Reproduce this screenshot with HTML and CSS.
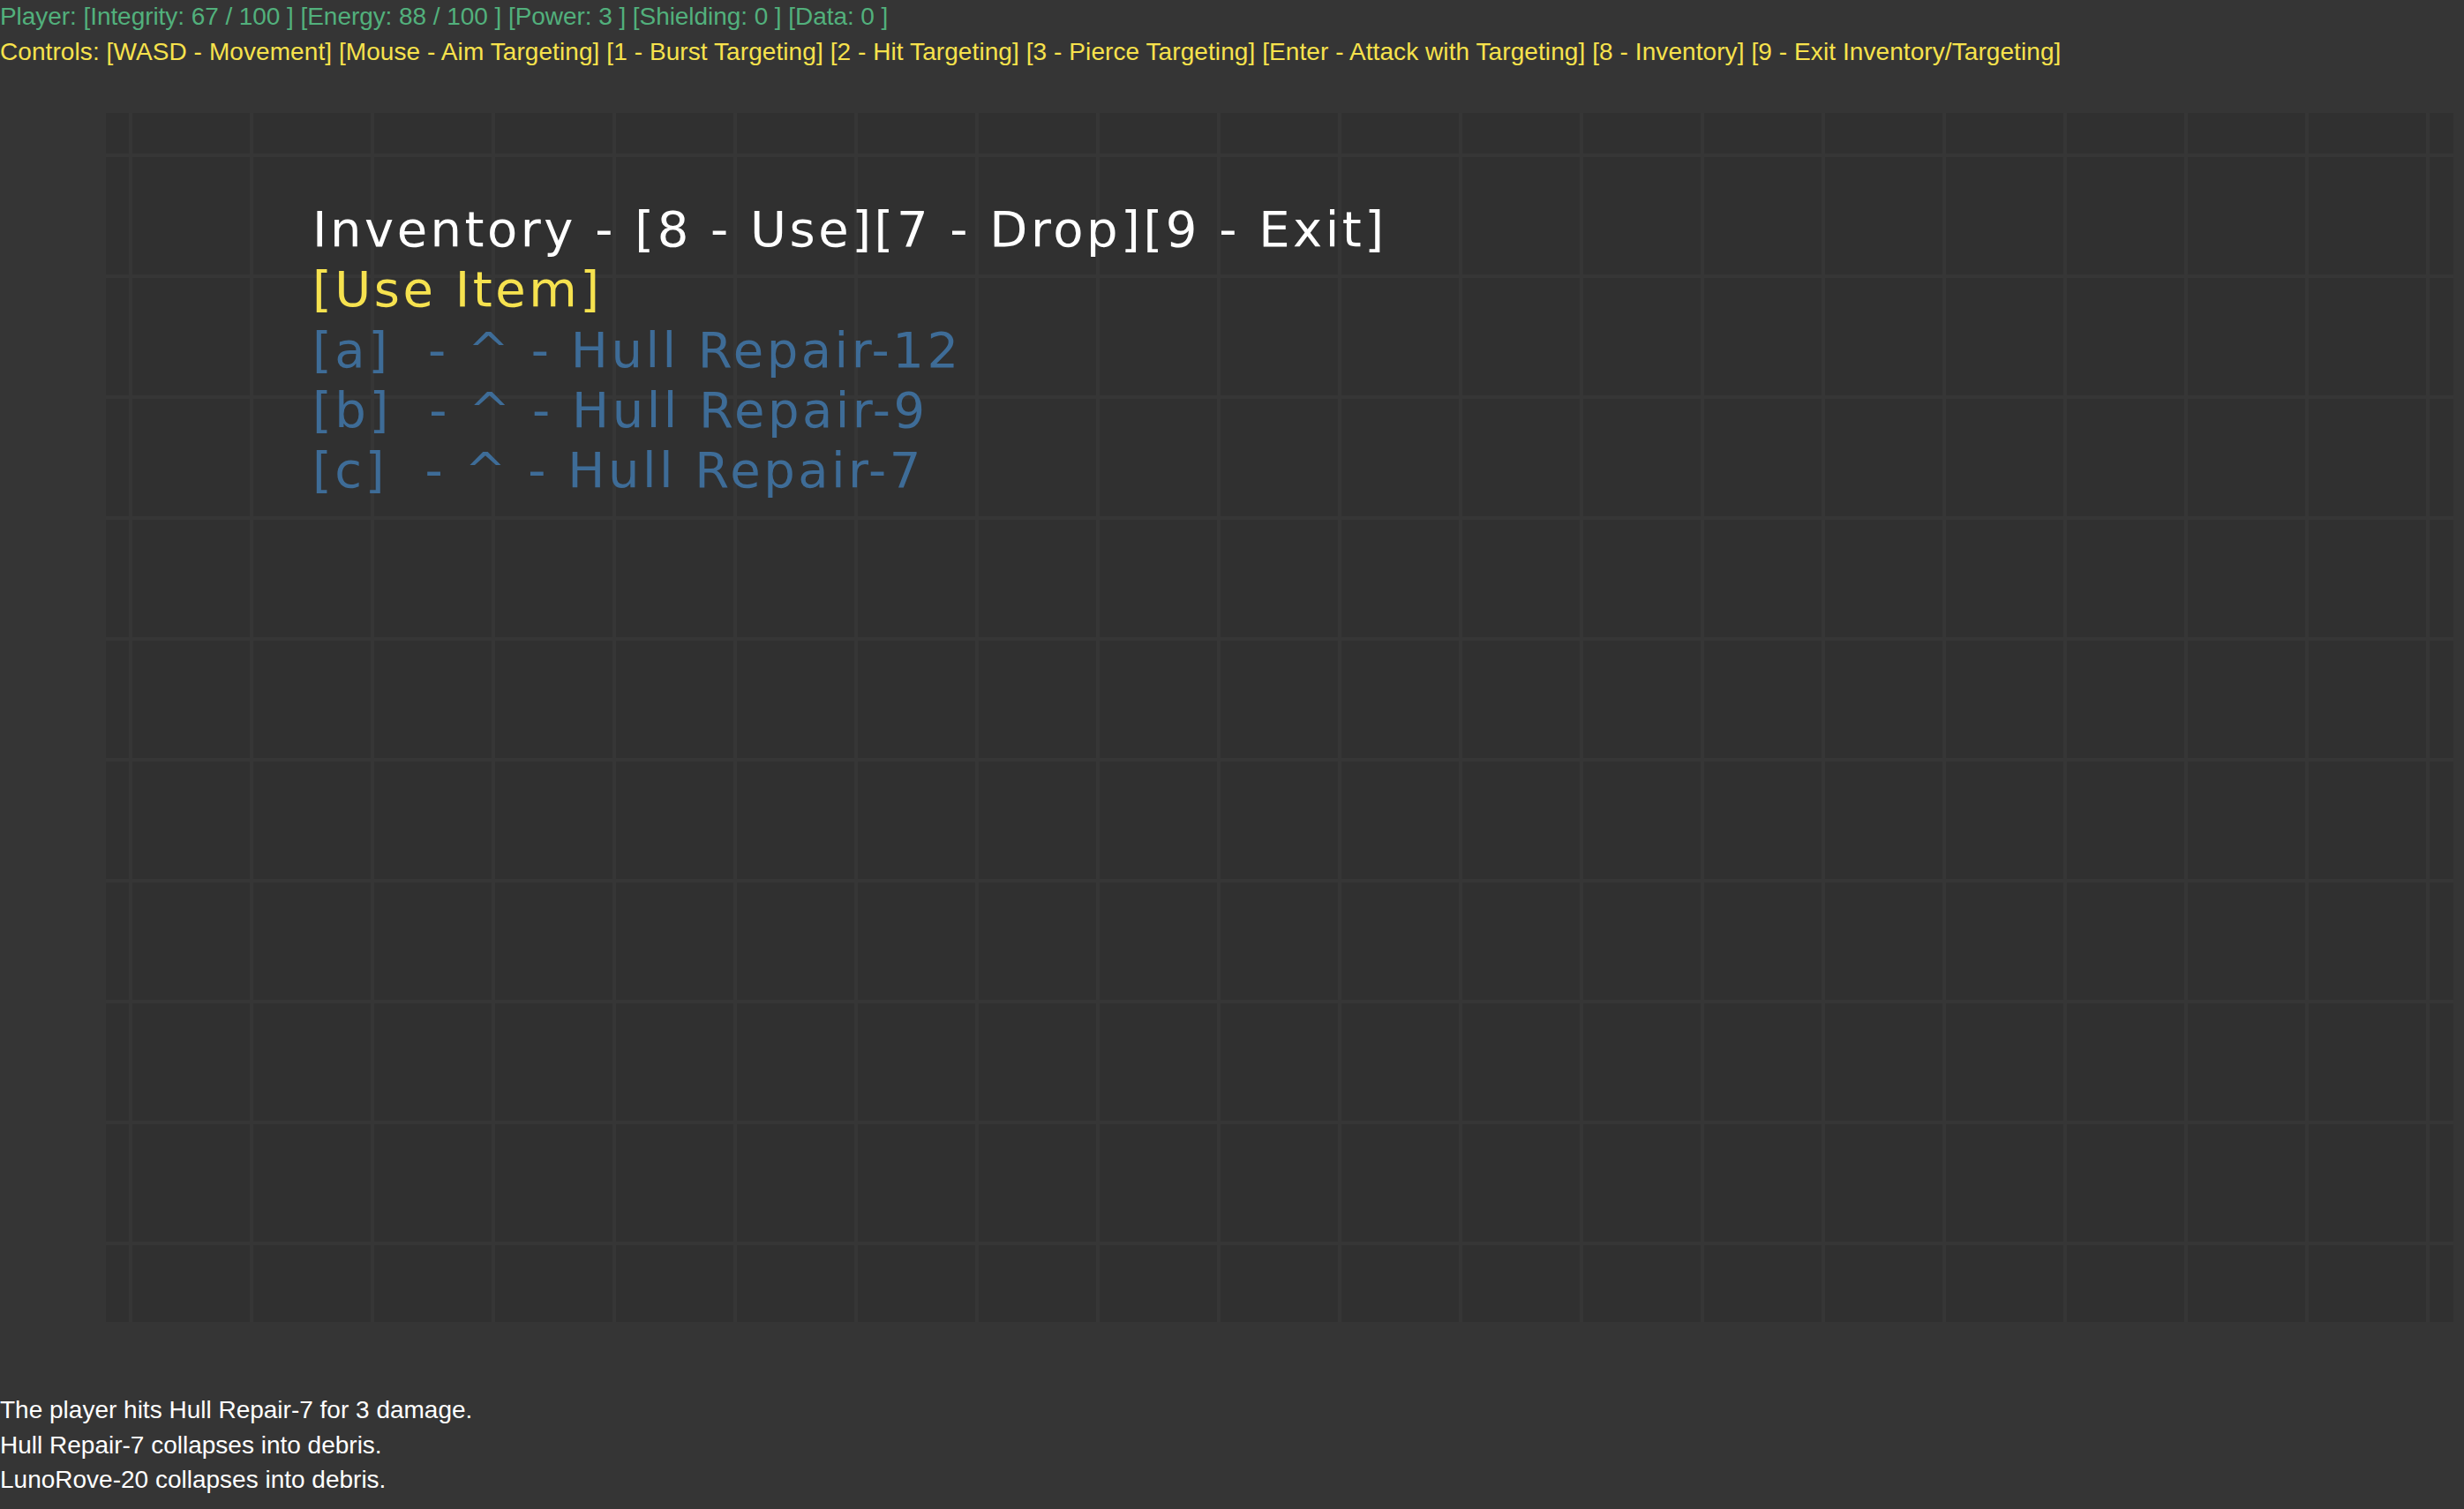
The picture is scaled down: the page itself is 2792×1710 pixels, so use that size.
FILE: index.html
```html
<!DOCTYPE html>
<html lang="en">
<head>
<meta charset="utf-8">
<title>Inventory</title>
<link rel="stylesheet" href="styles.css">
</head>
<body>
<header class="hud">
  <div class="hud-line hud-player">Player: [Integrity: 67 / 100 ] [Energy: 88 / 100 ] [Power: 3 ] [Shielding: 0 ] [Data: 0 ]</div>
  <div class="hud-line hud-controls">Controls: [WASD - Movement] [Mouse - Aim Targeting] [1 - Burst Targeting] [2 - Hit Targeting] [3 - Pierce Targeting] [Enter - Attack with Targeting] [8 - Inventory] [9 - Exit Inventory/Targeting]</div>
</header>
<main class="board">
  <section class="inventory">
    <div class="inv-line inv-title">Inventory - [8 - Use][7 - Drop][9 - Exit]</div>
    <div class="inv-line inv-mode">[Use Item]</div>
    <div class="inv-line inv-item">[a]  - ^ - Hull Repair-12</div>
    <div class="inv-line inv-item">[b]  - ^ - Hull Repair-9</div>
    <div class="inv-line inv-item">[c]  - ^ - Hull Repair-7</div>
  </section>
</main>
<footer class="log">
  <div class="log-line">The player hits Hull Repair-7 for 3 damage.</div>
  <div class="log-line">Hull Repair-7 collapses into debris.</div>
  <div class="log-line">LunoRove-20 collapses into debris.</div>
</footer>
</body>
</html>
```
FILE: styles.css
```css
html, body {
  margin: 0;
  padding: 0;
  background: #353535;
}
body {
  width: 2792px;
  height: 1710px;
  overflow: hidden;
  font-family: "Liberation Sans", Arial, sans-serif;
}
.hud-line {
  font-size: 28px;
  line-height: 40px;
  height: 40px;
  white-space: nowrap;
  position: relative;
  top: -1px;
}
.hud-player { color: #52b07c; letter-spacing: -0.06px; }
.hud-controls { color: #f7e24c; letter-spacing: 0.08px; }

.board {
  margin: 48px 12px 0 120px;
  width: 2660px;
  height: 1370px;
  background-color: #303030;
  background-image:
    linear-gradient(to right, #363636 4px, transparent 4px),
    linear-gradient(to bottom, #363636 4px, transparent 4px);
  background-size: 137px 100%, 100% 137px;
  background-position: 26px 0, 0 46px;
  background-repeat: repeat-x, repeat-y;
  box-sizing: border-box;
  padding: 98px 0 0 234px;
}
.inventory {
  font-family: "DejaVu Sans", Verdana, sans-serif;
  font-size: 56px;
  line-height: 68.3px;
  letter-spacing: 3.5px;
}
.inv-line {
  white-space: pre;
}
.inv-title { color: #ffffff; }
.inv-mode { color: #f6e24f; }
.inv-item { color: #3e6c97; }

.log {
  margin-top: 80px;
}
.log-line {
  color: #ffffff;
  font-size: 28px;
  line-height: 39.5px;
  white-space: nowrap;
}
```
